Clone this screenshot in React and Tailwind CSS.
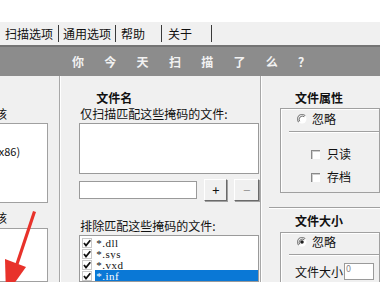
import React from "react";

function Radio({ checked }) {
  return (
    <svg width="10" height="10" viewBox="0 0 10 10" className="shrink-0">
      <circle cx="5" cy="5" r="4.5" fill="#fff" />
      <path d="M8.2 1.8 A4.5 4.5 0 0 0 1.8 8.2" stroke="#8a8a8a" strokeWidth="1.2" fill="none" />
      <path d="M7.3 2.7 A3.3 3.3 0 0 0 2.7 7.3" stroke="#5a5a5a" strokeWidth="0.9" fill="none" />
      {checked && <circle cx="5" cy="5" r="1.8" fill="#222" />}
    </svg>
  );
}

function ClassicCheck() {
  return (
    <div className="w-[9px] h-[9px] shrink-0 bg-white border-t border-l border-[#8a8a8a] shadow-[inset_1px_1px_0_#cfcfcf]" />
  );
}

function ListCheck() {
  return (
    <svg width="10" height="10" viewBox="0 0 10 10" className="shrink-0">
      <rect x="0.5" y="0.5" width="9" height="9" fill="#fff" stroke="#c8c8c8" />
      <path d="M2 5 L4 7.5 L8.3 2.2" stroke="#111" strokeWidth="1.8" fill="none" />
    </svg>
  );
}

function Sep() {
  return (
    <div className="w-[2px] self-stretch flex">
      <div className="w-px bg-[#a8a8a8]" />
      <div className="w-px bg-white" />
    </div>
  );
}

export default function App() {
  const banner = ["你", "今", "天", "扫", "描", "了", "么", "？"];
  const items = ["*.dll", "*.sys", "*.vxd", "*.inf"];
  return (
    <div className="w-[380px] h-[282px] overflow-hidden bg-[#f0f0f0] relative font-['Noto_Sans_CJK_SC',sans-serif] text-[12px] leading-[12px] text-[#111]">
      <div className="h-[22px] bg-white" />
      {/* tabs */}
      <div className="h-[23px] flex items-center">
        <span className="ml-[5px]">扫描选项</span>
        <span className="ml-[5px] w-px h-[17px] bg-[#3a3a3a]" />
        <span className="ml-[4px]">通用选项</span>
        <span className="ml-[4px] w-px h-[17px] bg-[#3a3a3a]" />
        <span className="ml-[5px]">帮助</span>
        <span className="ml-[16px] w-px h-[17px] bg-[#3a3a3a]" />
        <span className="ml-[6px]">关于</span>
        <span className="ml-[19px] w-px h-[17px] bg-[#3a3a3a]" />
      </div>
      {/* banner */}
      <div className="h-[31px] bg-[#8c8c8c] border-t-2 border-[#747474] flex items-center pl-[72px]">
        {banner.map((c, i) => (
          <span key={i} className="w-[32.3px] shrink-0 text-[12px] font-bold text-[#f2f2f2]">
            {c}
          </span>
        ))}
      </div>
      {/* columns */}
      <div className="flex h-[206px]">
        {/* left */}
        <div className="w-[65px] flex flex-col">
          <div className="mt-[32px] ml-[-5px]">核</div>
          <div className="mt-[3px] ml-[-2px] w-[50px] h-[80px] bg-white border border-[#a0a0a0] pt-[21px]">
            <div className="ml-[-4px] whitespace-nowrap text-[11px]">(x86)</div>
          </div>
          <div className="mt-[9px] ml-[-5px]">核</div>
          <div className="mt-[4px] ml-[-2px] w-[50px] flex-1 bg-white border border-[#a0a0a0]" />
        </div>
        <Sep />
        {/* middle */}
        <div className="w-[216px] flex flex-col pl-[18px]">
          <div className="mt-[16px] ml-[17px] font-bold">文件名</div>
          <div className="mt-[4px] ml-[1px] whitespace-nowrap">仅扫描匹配这些掩码的文件:</div>
          <div className="mt-[3px] w-[180px] h-[55px] bg-white border border-[#9a9a9a]" />
          <div className="mt-[5px] flex items-center h-[22px]">
            <div className="w-[118px] h-[18px] bg-white border border-[#9a9a9a]" />
            <div className="ml-[7px] w-[23px] h-[22px] flex items-center justify-center bg-[#f0f0f0] border-t border-l border-white border-r border-b border-r-[#6a6a6a] border-b-[#6a6a6a] shadow-[1px_1px_0_#a0a0a0] text-[13px]">
              +
            </div>
            <div className="ml-[7px] w-[25px] h-[22px] flex items-center justify-center bg-[#f0f0f0] border-t border-l border-white border-r border-b border-r-[#6a6a6a] border-b-[#6a6a6a] shadow-[1px_1px_0_#a0a0a0] text-[13px] text-[#9a9a9a]">
              −
            </div>
          </div>
          <div className="mt-[19px] ml-[1px] whitespace-nowrap">排除匹配这些掩码的文件:</div>
          <div className="mt-[3px] w-[180px] flex-1 bg-white border border-[#9a9a9a] pt-[1px]">
            {items.map((t, i) => (
              <div key={t} className="h-[11px] flex items-center pl-[2px] overflow-hidden">
                <ListCheck />
                <span
                  className={
                    "ml-[3px] h-[11px] flex items-center pl-[1px] font-['Liberation_Serif',serif] text-[11px] leading-[10px] tracking-[0.5px] " +
                    (i === 3 ? "flex-1 bg-[#0a78d6] text-white" : "")
                  }
                >
                  {t}
                </span>
              </div>
            ))}
          </div>
        </div>
        <Sep />
        {/* right */}
        <div className="flex-1 flex flex-col">
          <div className="mt-[16px] ml-[33px] font-bold whitespace-nowrap">文件属性</div>
          <div className="mt-[4px] ml-[18px] w-[100px] h-[85px] border border-[#a0a0a0] shadow-[inset_1px_1px_0_#fff] flex flex-col">
            <div className="mt-[4px] ml-[16px] flex items-center h-[12px]">
              <Radio />
              <span className="ml-[5px]">忽略</span>
            </div>
            <div className="mt-[6px] ml-[8px] h-[2px] border-t border-[#a0a0a0] border-b border-b-white" />
            <div className="mt-[15px] ml-[30px] flex items-center h-[12px]">
              <ClassicCheck />
              <span className="ml-[7px]">只读</span>
            </div>
            <div className="mt-[11px] ml-[30px] flex items-center h-[12px]">
              <ClassicCheck />
              <span className="ml-[7px]">存档</span>
            </div>
          </div>
          <div className="mt-[14px] ml-[7px] h-[2px] border-t border-[#a0a0a0] border-b border-b-white" />
          <div className="mt-[6px] ml-[33px] font-bold whitespace-nowrap">文件大小</div>
          <div className="mt-[5px] ml-[18px] w-[100px] flex-1 border border-[#a0a0a0] border-b-0 shadow-[inset_1px_1px_0_#fff] flex flex-col">
            <div className="mt-[3px] ml-[16px] flex items-center h-[12px]">
              <Radio checked />
              <span className="ml-[5px]">忽略</span>
            </div>
            <div className="mt-[6px] ml-[8px] h-[2px] border-t border-[#a0a0a0] border-b border-b-white" />
            <div className="mt-[7px] ml-[14px] flex items-center h-[17px]">
              <span className="whitespace-nowrap">文件大小</span>
              <div className="ml-[1px] w-[30px] h-[17px] bg-white border border-[#9a9a9a] text-[9px] leading-[10px] text-[#888] pl-[1px]">
                0
              </div>
            </div>
          </div>
        </div>
      </div>
      {/* red arrow */}
      <svg className="absolute left-0 top-0 pointer-events-none" width="380" height="282" viewBox="0 0 380 282">
        <polygon points="33,211 36,212 18,266 15,265" fill="#e8322b" />
        <polygon points="5,259 26,267 6,295" fill="#e8322b" />
      </svg>
    </div>
  );
}
